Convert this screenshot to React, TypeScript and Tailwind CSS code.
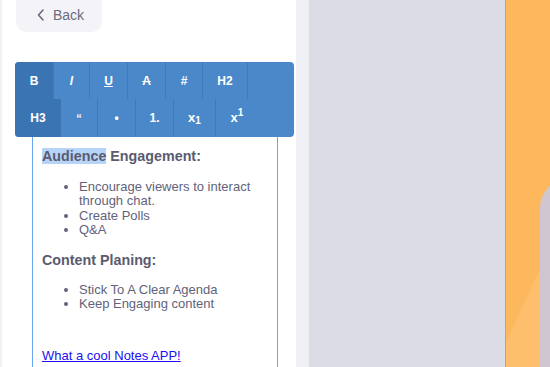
import React from "react";

export default function App() {
  return (
    <div className="flex w-[550px] h-[367px] overflow-hidden" style={{ fontFamily: '"Liberation Sans", Arial, sans-serif' }}>
      <div className="w-[2px] bg-[#f0f1f5]" />
      <div className="w-[294px] bg-white flex flex-col">
        <div className="ml-[14px] w-[86px] h-[32px] rounded-b-[10px] bg-[#f4f4f8] flex items-center pl-[21px] pb-[2px] text-[14px] text-[#6b6b80] gap-[8px] shrink-0">
          <svg width="8" height="12" viewBox="0 0 8 12" fill="none" stroke="#6b6b80" strokeWidth="1.6" strokeLinecap="round" strokeLinejoin="round"><path d="M6 1 L1.5 6 L6 11" /></svg>
          <span>Back</span>
        </div>
        <div className="mt-[30px] ml-[13px] w-[279px] h-[75px] rounded-[4px] bg-[#4a88c9] flex flex-col overflow-hidden text-white text-[12px] font-bold shrink-0">
          <div className="flex h-[37px]">
            <div className="w-[39px] bg-[#3b74b3] flex items-center justify-center border-r border-[#4278b5]">B</div>
            <div className="w-[36px] flex items-center justify-center border-r border-[#4079b9] italic">I</div>
            <div className="w-[38px] flex items-center justify-center border-r border-[#4079b9] underline">U</div>
            <div className="w-[38px] flex items-center justify-center border-r border-[#4079b9] line-through">A</div>
            <div className="w-[37px] flex items-center justify-center border-r border-[#4079b9]">#</div>
            <div className="w-[45px] flex items-center justify-center border-r border-[#4079b9]">H2</div>
            <div className="flex-1" />
          </div>
          <div className="flex h-[38px]">
            <div className="w-[46px] bg-[#3b74b3] flex items-center justify-center">H3</div>
            <div className="w-[37px] flex items-center justify-center border-r border-[#4079b9] text-[11px]">“</div>
            <div className="w-[38px] flex items-center justify-center border-r border-[#4079b9]">•</div>
            <div className="w-[38px] flex items-center justify-center border-r border-[#4079b9]">1.</div>
            <div className="w-[42px] flex items-center justify-center border-r border-[#4079b9] text-[13px]">x<sub className="text-[10px]">1</sub></div>
            <div className="flex-1 flex items-center justify-center pr-[36px] text-[13px]">x<sup className="text-[10px]">1</sup></div>
          </div>
        </div>
        <div className="ml-[30px] w-[246px] flex-1 border-x border-[#6aa8ee] pl-[9px] pt-[10px] text-[#5b5b70]">
          <div className="text-[14.3px] font-bold leading-[18px]"><span className="bg-[#b6d4f7]">Audience</span> Engagement:</div>
          <ul className="mt-[15px] pl-[37px] list-disc text-[13px] leading-[14.4px] pr-[10px] text-[#62627a]">
            <li>Encourage viewers to interact through chat.</li>
            <li>Create Polls</li>
            <li>Q&amp;A</li>
          </ul>
          <div className="mt-[13px] text-[14.3px] font-bold leading-[18px]">Content Planing:</div>
          <ul className="mt-[14px] pl-[37px] list-disc text-[13px] leading-[14.4px] text-[#62627a]">
            <li>Stick To A Clear Agenda</li>
            <li>Keep Engaging content</li>
          </ul>
          <div className="mt-[37px] text-[13px] leading-[15px] text-[#2010f0] underline">What a cool Notes APP!</div>
        </div>
      </div>
      <div className="w-[13px] bg-[#eff0f5]" />
      <div className="w-[196px] bg-[#dcdce6]" />
      <div className="w-[1px] bg-[#c9a46c]" />
      <div className="flex-1 bg-[#fdb75c] relative overflow-hidden">
        <div className="absolute left-[10px] top-[170px] w-[200px] h-[300px] bg-[#fec474] opacity-60" style={{ transform: "skewX(-25deg)" }} />
        <div className="absolute left-[34px] top-[178px] w-[60px] h-[220px] rounded-tl-[30px] bg-[#cfc6d2]" />
      </div>
    </div>
  );
}
